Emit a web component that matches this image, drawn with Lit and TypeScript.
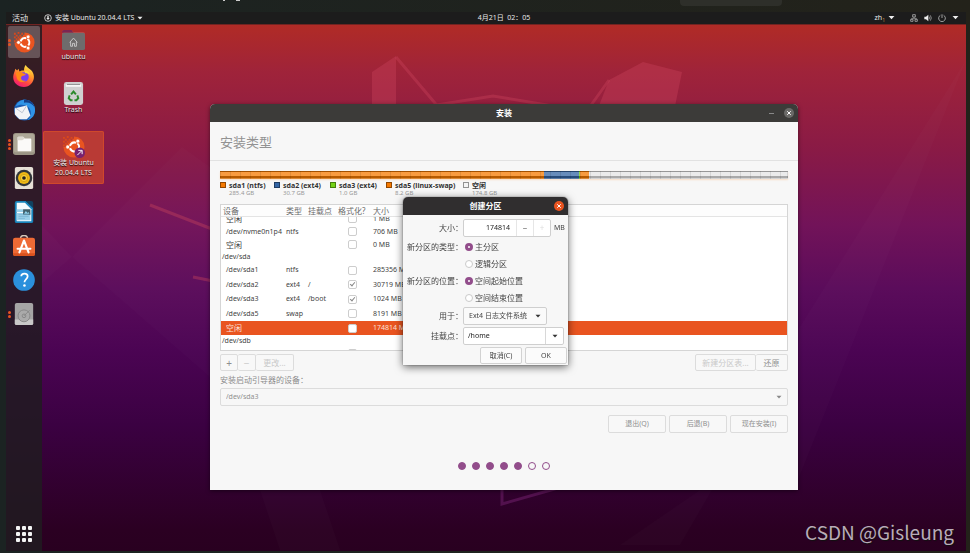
import { LitElement, html, css, svg, nothing } from "lit";
import { customElement, query, state } from "lit/decorators.js";
import { classMap } from "lit/directives/class-map.js";
import { styleMap } from "lit/directives/style-map.js";

const base = css`
  *, *::before, *::after { box-sizing: border-box; }
  button, input, select { font: inherit; color: inherit; margin: 0; padding: 0; border: 0; background: none; border-radius: 0; }
  ul { list-style: none; margin: 0; padding: 0; }
  h1, h2, p { margin: 0; font-weight: 400; }
  a { color: inherit; text-decoration: none; }
  svg { display: block; }
`;

const ubuntuMark = svg`
  <path d="M12.500 1.500A11 11 0 1 1 1.500 12.500H4V10H6V8H8V6H11V4H12.500z" fill="#e95420"/>
  <g fill="#d9481c"><path d="M1 2h2v2H1zM5 1h2v2H5zM9 2h2v2H9zM3 4h2v2H3zM7 4h2v2H7zM1 6h2v2H1zM5 6h2v2H5zM3 8h2v2H3zM1 10h2v2H1z"/></g>
  <circle cx="13" cy="12.500" r="4.800" fill="none" stroke="#fff" stroke-width="2.200" stroke-dasharray="7.900 2.150" transform="rotate(-54 13 12.500)"/>
  <g fill="#fff" stroke="#e95420" stroke-width=".6"><circle cx="6" cy="12.500" r="2"/><circle cx="16.500" cy="6.400" r="2"/><circle cx="16.500" cy="18.600" r="2"/></g>`;

const icons: Record<string, unknown> = {
  ubuntu: ubuntuMark,
  shortcut: svg`${ubuntuMark}<circle cx="18.500" cy="18.500" r="5.500" fill="#77216f"/><path d="M16 21l4.500-4.500M17 16h4v4" stroke="#fff" fill="none"/>`,
  firefox: svg`
    <defs><linearGradient id="fx" x1=".8" y1="0" x2=".3" y2="1"><stop offset="0" stop-color="#fff44f"/><stop offset=".35" stop-color="#ffa62b"/><stop offset=".7" stop-color="#ff4b3e"/><stop offset="1" stop-color="#f0177a"/></linearGradient></defs>
    <path d="M14 0c1 3 5 4 7 7 5 8-1 17-9 17S-1 18 .5 11C1 8 2 7 2.500 4l2 2L6 4l1 3c2-1 3-1 5-1 0-3 1-5 2-6z" fill="url(#fx)"/>
    <circle cx="12" cy="13" r="5.200" fill="#7a3ff2"/>
    <path d="M3 9c3-3 6-1 8 0l3 1c-1 2-4 1-5 3-1 3 2 5 5 4-4 4-10 0-10-4z" fill="#ff8a16"/>
    <path d="M13 6c3 0 5 2 6 5-2-2-4-2-6-2z" fill="#ffd43a"/>`,
  thunderbird: svg`
    <circle cx="12.500" cy="12" r="11.500" fill="#1c5cb0"/>
    <path d="M3 8C5 2 12-1 18 2c6 3 8 11 4 17-2 2-4 4-6 4 4-4 5-9 1-14-4-3-9-4-14-1z" fill="#2f93e6"/>
    <path d="M12 1c5-1 10 2 11.500 8C21 5 17 3 12 4z" fill="#153e86"/>
    <path d="M2 10l13-3 4 11-4 4H7l-5-5z" fill="#f3f4f7"/><path d="M3 10l7 5 5-8" stroke="#b9c2cf" fill="none"/>`,
  files: svg`
    <rect x="0" y="0" width="24" height="24" rx="3" fill="#9a9484"/><rect x="1" y="1" width="22" height="20" rx="2" fill="#aea897"/>
    <path d="M5 5q0-1 1-1h5l2 2h6q1 0 1 1v12q0 1-1 1H6q-1 0-1-1z" fill="#fbfaf8"/><path d="M5 8V5q0-1 1-1h5l2 2-3 2z" fill="#ddd9cf"/>`,
  music: svg`
    <rect x="2" y="0" width="20" height="24" rx="2" fill="#e6e0d6"/><circle cx="12" cy="12" r="9" fill="#32363a"/><circle cx="12" cy="12" r="6.500" fill="#f0b914"/>
    <circle cx="12" cy="12" r="4" fill="#fbd034" stroke="#b88708" stroke-width=".6"/><circle cx="12" cy="12" r="2" fill="#222"/>`,
  writer: svg`
    <path d="M4 0h10l8 7v15q0 2-2 2H4q-2 0-2-2V2q0-2 2-2z" fill="#1783ba"/><path d="M14 0h6q2 0 2 2v6z" fill="#10415f"/>
    <path d="M4 2h9l7 7v13H4z" fill="#f4fbff"/><path d="M4 9h7v3H4zM4 13h15v8H4z" fill="#9bd0ea"/><path d="M11 9h8v6h-8z" fill="#40606c"/><path d="M12 14l2-3 2 2 1-1 1 2z" fill="#8ed3ef"/><path d="M6 15h11M6 17h11M6 19h7" stroke="#6faed0" stroke-width=".7"/>`,
  store: svg`
    <path d="M8 5c0-6 8-6 8 0" stroke="#d8c8ba" stroke-width="1.500" fill="none"/><rect x="0" y="3" width="24" height="20" rx="2.500" fill="#ee6a35"/><path d="M0 20h24v1q0 2-2 2H2q-2 0-2-2z" fill="#d9521f"/>
    <path d="M12 6L7 19M12 6l5 13M5 15h14" stroke="#fff" stroke-width="2.300" stroke-linecap="round" fill="none"/>`,
  help: svg`
    <circle cx="12" cy="12" r="11.800" fill="#2b90dc"/><path d="M9 8c0-4 7-4 7 0 0 3-3.500 3-3.500 6.500" stroke="#fff" stroke-width="1.900" fill="none"/><circle cx="12.500" cy="18" r="1.400" fill="#fff"/>`,
  disk: svg`
    <rect x="2" y="0" width="20" height="24" rx="2" fill="#a5a5a5"/><path d="M2 18h20v4q0 2-2 2H4q-2 0-2-2z" fill="#c8c8c8"/>
    <circle cx="12" cy="14" r="6.500" fill="#aaa" stroke="#858585"/><circle cx="12" cy="14" r="2" fill="none" stroke="#858585"/><path d="M12 14l6-6" stroke="#858585"/>`,
  home: svg`
    <path d="M0 3q0-2 2-2h8l2 2h10q2 0 2 2v3H0z" fill="#c9403f"/><path d="M0 3q0-2 2-2h8l2 3H0z" fill="#7b2551"/>
    <rect x="0" y="4" width="24" height="18" rx="2" fill="#6e6c6c"/><path d="M8 14l4-4.500 4 4.500M9 13v5h2v-3h2v3h2v-5" stroke="#c9c9c9" fill="none"/>`,
  trash: svg`
    <rect x="2" y="0" width="20" height="24" rx="2.500" fill="#d0d0d0"/><path d="M4 2h16v3H4z" fill="#f7f7f7"/><path d="M5 2h14v1H5z" fill="#888"/>
    <g stroke="#2c8a2c" stroke-width="2" fill="none"><path d="M9.500 13l2.500-3 2.500 3"/><path d="M16 14l1 3-2 2h-2"/><path d="M8 14l-1 3 2 2h2"/></g>`,
  disc: svg`<circle cx="12" cy="12" r="10" fill="none" stroke="#ddd" stroke-width="2.500"/><path d="M10 5h4v7h3l-5 6-5-6h3z" fill="#eee"/>`,
  network: svg`<path d="M8 2h8v7H8zM2 16h7v6H2zM15 16h7v6h-7z" fill="none" stroke="#aaa" stroke-width="2.500"/><path d="M12 9v4M5 16v-3h14v3" stroke="#aaa" stroke-width="2" fill="none"/>`,
  volume: svg`<path d="M1 8h5l7-6v20l-7-6H1z" fill="#eee"/><path d="M16 8q3 4 0 8M19 4q6 8 0 16" stroke="#bbb" stroke-width="2" fill="none"/>`,
  power: svg`<path d="M7 4a10 10 0 1 0 10 0M12 1v11" stroke="#bbb" stroke-width="2.500" fill="none"/>`,
  caret: svg`<path d="M2 7h20L12 18z" fill="currentColor"/>`,
  close: svg`<path d="M5 5l14 14M19 5L5 19" stroke="#fff" stroke-width="4" fill="none"/>`,
};
const icon = (name: string, cls: string) =>
  html`<svg class=${cls} viewBox="0 0 24 24" aria-hidden="true">${icons[name]}</svg>`;

interface Row { device: string; type?: string; mount?: string; size?: string; disk?: boolean; checked?: boolean; selected?: boolean; tall?: boolean; }
const rows: Row[] = [
  { device: "空闲", size: "1 MB" },
  { device: "/dev/nvme0n1p4", type: "ntfs", size: "706 MB" },
  { device: "空闲", size: "0 MB" },
  { device: "/dev/sda", disk: true },
  { device: "/dev/sda1", type: "ntfs", size: "285356 MB", tall: true },
  { device: "/dev/sda2", type: "ext4", mount: "/", size: "30719 MB", checked: true, tall: true },
  { device: "/dev/sda3", type: "ext4", mount: "/boot", size: "1024 MB", checked: true, tall: true },
  { device: "/dev/sda5", type: "swap", size: "8191 MB", tall: true },
  { device: "空闲", size: "174814 MB", selected: true },
  { device: "/dev/sdb", disk: true },
  { device: "/dev/sdb2", type: "ntfs", size: "999423 MB" },
];
const segments = [
  { color: "#f57900", share: 324 }, { color: "#3465a4", share: 35 }, { color: "#73d216", share: 1 },
  { color: "#f57900", share: 9 }, { color: "#e4e4e4", share: 199 },
];
const legend = [
  { name: "sda1 (ntfs)", size: "285.4 GB", color: "#f57900" },
  { name: "sda2 (ext4)", size: "30.7 GB", color: "#3465a4" },
  { name: "sda3 (ext4)", size: "1.0 GB", color: "#73d216" },
  { name: "sda5 (linux-swap)", size: "8.2 GB", color: "#f57900" },
  { name: "空闲", size: "174.8 GB", color: "#f4f4f4" },
];

@customElement("partition-dialog")
class PartitionDialog extends LitElement {
  static styles = [base, css`
    :host { display: block; width: 165px; background: #f7f7f7; border-radius: 5px 5px 0 0; box-shadow: 0 2px 8px rgba(0,0,0,.6), 0 0 1px #222; color: #444; font-size: 8px; line-height: 10px; }
    .title { display: grid; grid-template-columns: 18px 1fr 18px; align-items: center; height: 18px; background: #302e2f; border-radius: 5px 5px 0 0; color: #fff; }
    .title h2 { grid-column: 2; text-align: center; font-size: 8px; font-weight: 700; }
    .x { display: grid; place-items: center; width: 10px; height: 10px; margin-left: 4px; border-radius: 50%; background: #e95420; }
    .x-icon { width: 6px; height: 6px; }
    form { display: grid; grid-template-columns: 60px 1fr; padding: 3px 1px 1px 0; margin: 0; }
    .label { text-align: right; white-space: nowrap; align-self: center; }
    .tall { height: 20px; display: flex; align-items: center; }
    .radio { height: 17px; display: flex; align-items: center; gap: 2px; padding-left: 2px; }
    .radio input { appearance: none; width: 8px; height: 8px; border: 1px solid #c9c9c9; border-radius: 50%; background: #fff; }
    .radio input:checked { border: 3px solid #924d8b; }
    .box { display: flex; height: 18px; border: 1px solid #cfcfcf; border-radius: 2px; background: #fff; overflow: hidden; }
    .spin { width: 88px; }
    .spin input { width: 52px; padding-right: 6px; text-align: right; font-size: 7px; color: #222; }
    .step { width: 18px; border-left: 1px solid #e6e6e6; color: #555; }
    .step.off { color: #ddd; }
    .unit { font-size: 7px; margin-left: 3px; }
    .pick { position: relative; width: 84px; background: #fafafa; }
    .pick select { appearance: none; width: 100%; padding-left: 5px; font-size: 7px; outline: 0; }
    .caret { width: 6px; height: 6px; color: #333; }
    .pick .caret { position: absolute; right: 5px; top: 5px; pointer-events: none; }
    .mount { width: 101px; }
    .mount input { flex: 1; min-width: 0; padding-left: 4px; font-size: 7px; color: #222; }
    .drop { display: grid; place-items: center; width: 18px; border-left: 1px solid #d8d8d8; }
    .actions { grid-column: 1 / -1; display: flex; justify-content: flex-end; gap: 3px; margin-top: 1px; }
    .actions button { width: 42px; height: 17px; border: 1px solid #d2d2d2; border-radius: 2px; background: #fbfbfb; font-size: 7px; }
  `];
  render() {
    return html`
      <header class="title"><h2>创建分区</h2><button class="x" aria-label="关闭">${icon("close", "x-icon")}</button></header>
      <form @submit=${(e: Event) => e.preventDefault()}>
        <label class="label" for="size">大小：</label>
        <div class="tall"><div class="box spin"><input id="size" value="174814"><button type="button" class="step">−</button><button type="button" class="step off">+</button></div><span class="unit">MB</span></div>
        <span class="label">新分区的类型：</span><label class="radio"><input type="radio" name="kind" checked>主分区</label>
        <span></span><label class="radio"><input type="radio" name="kind">逻辑分区</label>
        <span class="label">新分区的位置：</span><label class="radio"><input type="radio" name="place" checked>空间起始位置</label>
        <span></span><label class="radio"><input type="radio" name="place">空间结束位置</label>
        <label class="label" for="fs">用于：</label>
        <div class="tall"><div class="box pick"><select id="fs"><option>Ext4 日志文件系统</option></select>${icon("caret", "caret")}</div></div>
        <label class="label" for="mount">挂载点：</label>
        <div class="tall"><div class="box mount"><input id="mount" value="/home"><button type="button" class="drop" aria-label="选择挂载点">${icon("caret", "caret")}</button></div></div>
        <div class="actions"><button type="button">取消(C)</button><button>OK</button></div>
      </form>`;
  }
}

@customElement("installer-window")
class InstallerWindow extends LitElement {
  static styles = [base, css`
    :host { display: flex; flex-direction: column; position: relative; min-height: 386px; background: #f7f7f7; border-radius: 5px 5px 0 0; box-shadow: 0 1px 4px rgba(0,0,0,.5); color: #4b4b4b; font-size: 8px; line-height: 10px; }
    .title { display: grid; grid-template-columns: 60px 1fr 60px; align-items: center; height: 18px; background: #3c3b39; border-radius: 5px 5px 0 0; color: #fff; }
    .title h1 { grid-column: 2; text-align: center; font-size: 8px; font-weight: 700; }
    .controls { display: flex; justify-content: flex-end; align-items: center; gap: 10px; padding-right: 4px; }
    .min { width: 5px; height: 1px; background: #888; }
    .x { display: grid; place-items: center; width: 10px; height: 10px; border-radius: 50%; background: #6b6a68; }
    .x-icon { width: 6px; height: 6px; }
    .heading { height: 39px; padding: 11px 10px 0; border-bottom: 1px solid #e2e2e2; font-size: 13px; line-height: 18px; color: #929292; }
    .body { padding: 10px; }
    .bar { display: flex; height: 8px; position: relative; box-shadow: 0 1px 2px rgba(245,121,0,.2); }
    .bar::after { content: ""; position: absolute; inset: 0; border: 1px solid rgba(0,0,0,.1); background: repeating-linear-gradient(90deg, transparent 0 9px, rgba(0,0,0,.09) 9px 10px), linear-gradient(rgba(255,255,255,.25) 0 60%, rgba(0,0,0,.26) 60% 100%); }
    .legend { display: grid; grid-template-columns: 54px 56px 56px 77px auto; height: 25px; padding-top: 2px; font-size: 7px; line-height: 9px; }
    .legend li { display: grid; grid-template-columns: 9px auto; align-content: start; white-space: nowrap; }
    .legend b { color: #333; }
    .legend small { grid-column: 2; font-size: 6px; line-height: 7px; color: #999; }
    .swatch { width: 6px; height: 6px; margin-top: 1px; border: 1px solid rgba(0,0,0,.4); }
    .scroller { height: 147px; overflow: hidden; border: 1px solid #d5d5d5; background: #fff; }
    table { width: 100%; table-layout: fixed; border-collapse: separate; border-spacing: 0; white-space: nowrap; }
    .c1 { width: 65px; } .c2 { width: 22px; } .c3 { width: 30px; } .c4 { width: 35px; }
    th { position: sticky; top: 0; z-index: 1; height: 12px; padding: 0; background: #fdfdfd; border-bottom: 1px solid #e4e4e4; text-align: left; font-weight: 400; color: #6b6b6b; }
    th:first-child { padding-left: 2px; }
    td { height: 13px; padding: 0; font-size: 7px; line-height: 10px; color: #3f3f3f; }
    td:first-child { padding-left: 5px; }
    .disk td { height: 12px; }
    .disk td:first-child { padding-left: 1px; }
    .tall td { height: 14px; }
    .tall:nth-child(even) td { height: 15px; }
    .selected td { height: 14px; background: #e95420; color: #fbe0d6; }
    td.free { font-size: 8px; }
    .tick { display: block; appearance: none; width: 9px; height: 9px; margin-left: 10px; border: 1px solid #cdcdcd; border-radius: 2px; background: #fff; }
    .tick:checked { position: relative; }
    .tick:checked::after { content: ""; position: absolute; left: 2px; top: 0; width: 3px; height: 5px; border: solid #888; border-width: 0 1px 1px 0; transform: rotate(40deg); }
    .tools { display: flex; justify-content: space-between; margin-top: 3px; }
    .group { display: flex; }
    .btn { height: 17px; border: 1px solid #dcdcdc; border-radius: 2px; background: #f8f8f8; color: #8f8f8f; }
    .group .btn + .btn { border-left-width: 0; }
    .dim { color: #c9c9c9; }
    .sq { width: 18px; font-size: 10px; } .w2 { width: 38px; } .w3 { width: 61px; } .w4 { width: 32px; }
    .boot { display: block; margin: 4px 0 3px; color: #8c8c8c; }
    .combo { position: relative; }
    .combo select { display: block; appearance: none; width: 100%; height: 18px; padding-left: 5px; border: 1px solid #dcdcdc; border-radius: 2px; font-size: 7px; color: #8f8f8f; }
    .combo .caret { position: absolute; right: 6px; top: 6px; width: 6px; height: 6px; color: #888; pointer-events: none; }
    .nav { display: flex; justify-content: flex-end; gap: 3px; margin-top: 9px; }
    .nav .btn { width: 58px; height: 18px; font-size: 7px; }
    .dots { display: flex; justify-content: center; gap: 6px; margin-top: 29px; }
    .dot { width: 8px; height: 8px; border: 1px solid #924d8b; border-radius: 50%; }
    .dot.done { background: #924d8b; }
    .modal { position: absolute; left: calc(50% - 101px); top: 93px; z-index: 2; }
  `];
  @query(".scroller") private scroller!: HTMLElement;
  @state() private step = 5;
  firstUpdated() { this.scroller.scrollTop = 5; }
  render() {
    return html`
      <header class="title"><h1>安装</h1><div class="controls"><button class="min" aria-label="最小化"></button><button class="x" aria-label="关闭">${icon("close", "x-icon")}</button></div></header>
      <h2 class="heading">安装类型</h2>
      <section class="body">
        <div class="bar">${segments.map((s) => html`<span style=${styleMap({ background: s.color, flex: `${s.share} 1 0` })}></span>`)}</div>
        <ul class="legend">${legend.map((l) => html`<li><span class="swatch" style=${styleMap({ background: l.color })}></span><b>${l.name}</b><small>${l.size}</small></li>`)}</ul>
        <div class="scroller"><table>
          <colgroup><col class="c1"><col class="c2"><col class="c3"><col class="c4"><col></colgroup>
          <thead><tr><th>设备</th><th>类型</th><th>挂载点</th><th>格式化?</th><th>大小</th></tr></thead>
          <tbody>${rows.map((r) => html`<tr class=${classMap({ disk: !!r.disk, tall: !!r.tall, selected: !!r.selected })}>
            <td class=${classMap({ free: r.device === "空闲" })}>${r.device}</td><td>${r.type}</td><td>${r.mount}</td>
            <td>${r.disk ? nothing : html`<input class="tick" type="checkbox" aria-label=${"格式化 " + r.device} .checked=${!!r.checked}>`}</td><td>${r.size}</td></tr>`)}</tbody>
        </table></div>
        <div class="tools">
          <div class="group"><button class="btn sq">+</button><button class="btn sq dim" disabled>−</button><button class="btn w2 dim" disabled>更改...</button></div>
          <div class="group"><button class="btn w3 dim" disabled>新建分区表...</button><button class="btn w4">还原</button></div>
        </div>
        <label class="boot" for="boot">安装启动引导器的设备：</label>
        <div class="combo"><select id="boot"><option>/dev/sda3</option></select>${icon("caret", "caret")}</div>
        <div class="nav"><button class="btn">退出(Q)</button><button class="btn">后退(B)</button><button class="btn">现在安装(I)</button></div>
        <div class="dots">${Array.from({ length: 7 }, (_, i) => html`<span class=${classMap({ dot: true, done: i < this.step })}></span>`)}</div>
      </section>
      <partition-dialog class="modal"></partition-dialog>`;
  }
}

const dock = [
  { name: "ubuntu", label: "安装 Ubuntu", marks: 2 }, { name: "firefox", label: "Firefox", marks: 0 },
  { name: "thunderbird", label: "Thunderbird", marks: 0 }, { name: "files", label: "文件", marks: 3 },
  { name: "music", label: "Rhythmbox", marks: 0 }, { name: "writer", label: "Writer", marks: 0 },
  { name: "store", label: "Ubuntu Software", marks: 0 }, { name: "help", label: "帮助", marks: 0 },
  { name: "disk", label: "磁盘", marks: 2 },
];

@customElement("app-root")
class AppRoot extends LitElement {
  static styles = [base, css`
    :host { box-sizing: border-box; display: grid; grid-template-rows: 12px 12px 1fr; position: relative; min-height: 100vh; padding: 0 4px 2px 6px; background: linear-gradient(90deg, #1b2322, #23221a); color: #e8e8e8; font-family: "Noto Sans", "Noto Sans CJK SC", sans-serif; font-size: 7px; line-height: 10px; }
    .outer { position: relative; overflow: hidden; }
    .tab { position: absolute; right: 184px; top: 0; width: 102px; height: 6px; border-radius: 0 0 4px 4px; background: #2e2f2a; }
    .scrap { position: absolute; left: 217px; top: 0; width: 2px; height: 1px; background: #ccc; }
    .scrap.end { left: 230px; width: 4px; }
    .topbar { display: grid; grid-template-columns: 36px 1fr auto 1fr; align-items: center; background: #1c1c1c; }
    .right { display: flex; align-items: center; }
    .act { padding-left: 6px; text-align: left; font-size: 8px; line-height: 10px; white-space: nowrap; }
    .app { display: flex; align-items: center; gap: 3px; padding-left: 2px; white-space: nowrap; }
    .ic { width: 8px; height: 8px; }
    .ar { width: 6px; height: 6px; color: #eee; }
    .right { justify-content: flex-end; gap: 6px; padding-right: 7px; }
    .right .ar { width: 7px; height: 7px; }
    .lang { display: flex; align-items: center; gap: 3px; margin-right: 9px; }
    .lang sub { font-size: 5px; line-height: 5px; color: #c98a4a; }
    .desk { position: relative; display: grid; grid-template-columns: 36px 168px 1fr 168px; background: linear-gradient(#b02b26 0, #9f233a 9%, #891a46 24%, #721359 38%, #5b0c5b 50%, #4b0453 62%, #3b0142 76%, #2b0022 96%, #290020 100%); border-top: 1px solid #712422; overflow: hidden; }
    .wall { position: absolute; inset: 0; width: 100%; height: 100%; }
    .dock { position: relative; display: flex; flex-direction: column; gap: 2px; padding: 1px 2px 9px; background: rgba(32,27,32,.84); }
    .launch { position: relative; display: grid; place-items: center; width: 32px; height: 32px; border-radius: 2px; }
    .launch.on { background: rgba(255,255,255,.24); }
    .launch svg { width: 22px; height: 22px; }
    .marks { position: absolute; left: 0; top: 0; height: 100%; display: flex; flex-direction: column; justify-content: center; gap: 1px; }
    .mark { width: 3px; height: 3px; border-radius: 50%; background: #e95420; }
    .apps { display: grid; grid-template-columns: repeat(3, 4px); gap: 2px; margin: auto auto 0; }
    .apps i { width: 4px; height: 4px; border-radius: 1px; background: #f4f4f4; }
    .files { position: relative; padding-left: 1px; }
    .file { display: flex; flex-direction: column; align-items: center; width: 61px; height: 53px; padding-top: 4px; text-align: center; text-shadow: 0 1px 1px #000; }
    .file svg { width: 23px; height: 23px; }
    .file.sel { background: #b93a35; box-shadow: inset 0 0 0 1px #cf482b; border-radius: 2px; }
    .win { margin: 79px 0 61px; }
    .water { position: absolute; right: 16px; bottom: 6px; z-index: 3; font-family: "Noto Sans CJK SC", sans-serif; font-size: 19px; line-height: 30px; color: #b9acb8; text-shadow: 1px 1px 1px #111; }
  `];
  render() {
    return html`
      <div class="outer"><span class="scrap"></span><span class="scrap end"></span><span class="tab"></span></div>
      <header class="topbar">
        <button class="act">活动</button><button class="app">${icon("disc", "ic")}<span>安装 Ubuntu 20.04.4 LTS</span>${icon("caret", "ar")}</button>
        <time class="clock">4月21日&nbsp; 02：05</time>
        <div class="right"><button class="lang"><span>zh<sub>1</sub></span>${icon("caret", "ar")}</button>${icon("network", "ic")}${icon("volume", "ic")}${icon("power", "ic")}${icon("caret", "ar")}</div>
      </header>
      <main class="desk">
        <svg class="wall" viewBox="6 25 960 526" preserveAspectRatio="none" aria-hidden="true">
          <g fill="#c8405a" opacity=".4"><path d="M372 72l24-16v60h-24zM682 72l-39-10-34 18-14 36h78z"/></g>
          <g fill="none" stroke="#c8405a" stroke-width="3" opacity=".4"><path d="M396 57l44 52M609 80l-20 28M430 106l63-10 60 10M150 205l62 24M193 277l20 4"/></g>
          <path d="M502 488v16l56-16" fill="none" stroke="#6b1d66" stroke-width="3" opacity=".6"/>
          <g fill="#fff" opacity=".014"><path d="M42 225l30 32-30 26zM72 257l110-110 28 20v210zM966 60L798 330v150zM700 490l-80 55h60l32-55zM260 490l20 60h60l-20-60z"/></g>
        </svg>
        <nav class="dock">${dock.map((d, i) => html`<button class=${classMap({ launch: true, on: i === 0 })} aria-label=${d.label}>
            <span class="marks">${Array.from({ length: d.marks }, () => html`<i class="mark"></i>`)}</span>${icon(d.name, "")}</button>`)}
          <button class="apps" aria-label="显示应用程序">${Array.from({ length: 9 }, () => html`<i></i>`)}</button></nav>
        <div class="files">
          <a class="file" href="#home">${icon("home", "")}<span>ubuntu</span></a>
          <a class="file" href="#trash">${icon("trash", "")}<span>Trash</span></a>
          <a class="file sel" href="#install">${icon("shortcut", "")}<span>安装 Ubuntu<br>20.04.4 LTS</span></a>
        </div>
        <installer-window class="win"></installer-window>
      </main>
      <div class="water">CSDN @Gisleung</div>`;
  }
}
